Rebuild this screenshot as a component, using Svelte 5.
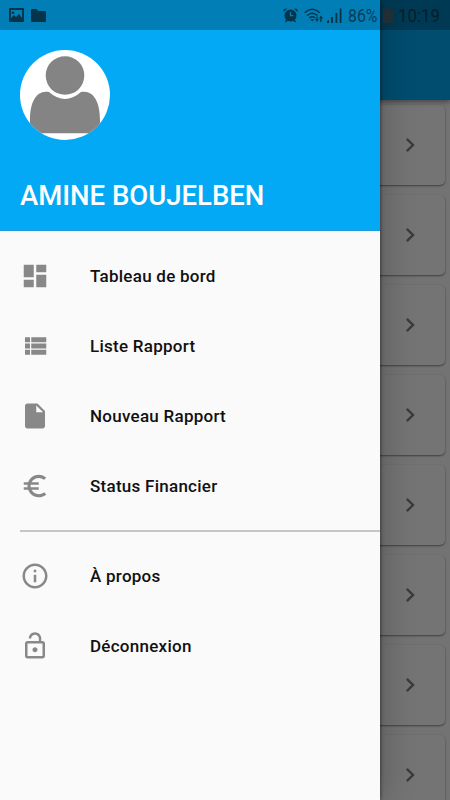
<script lang="ts">
  interface MenuItem {
    label: string
    icon: string
  }

  // Material icons, 24x24 grid
  const mainItems: MenuItem[] = [
    { label: 'Tableau de bord', icon: 'M3 13h8V3H3v10zm0 8h8v-6H3v6zm10 0h8V11h-8v10zm0-18v6h8V3h-8z' },
    { label: 'Liste Rapport', icon: 'M4 14h4v-4H4v4zm0 5h4v-4H4v4zM4 9h4V5H4v4zm5 5h12v-4H9v4zm0 5h12v-4H9v4zM9 5v4h12V5H9z' },
    { label: 'Nouveau Rapport', icon: 'M6 2c-1.1 0-1.99.9-1.99 2L4 20c0 1.1.89 2 1.99 2H18c1.1 0 2-.9 2-2V8l-6-6H6zm7 7V3.5L18.5 9H13z' },
    { label: 'Status Financier', icon: 'M15 18.5c-2.51 0-4.68-1.42-5.76-3.5H15v-2H8.58c-.05-.33-.08-.66-.08-1s.03-.67.08-1H15V9H9.24C10.32 6.92 12.5 5.5 15 5.5c1.61 0 3.09.59 4.23 1.57L21 5.3C19.41 3.87 17.3 3 15 3c-3.92 0-7.24 2.51-8.48 6H3v2h3.06c-.04.33-.06.66-.06 1s.02.67.06 1H3v2h3.52c1.24 3.49 4.56 6 8.48 6 2.31 0 4.41-.87 6-2.3l-1.78-1.77c-1.13.98-2.6 1.57-4.22 1.57z' },
  ]

  const otherItems: MenuItem[] = [
    { label: 'À propos', icon: 'M11 17h2v-6h-2v6zm1-15C6.48 2 2 6.48 2 12s4.48 10 10 10 10-4.48 10-10S17.52 2 12 2zm0 18c-4.41 0-8-3.59-8-8s3.59-8 8-8 8 3.59 8 8-3.59 8-8 8zM11 9h2V7h-2v2z' },
    { label: 'Déconnexion', icon: 'M12 17c1.1 0 2-.9 2-2s-.9-2-2-2-2 .9-2 2 .9 2 2 2zm6-9h-1V6c0-2.76-2.24-5-5-5S7 3.24 7 6h1.9c0-1.71 1.39-3.1 3.1-3.1s3.1 1.39 3.1 3.1v2H6c-1.1 0-2 .9-2 2v10c0 1.1.9 2 2 2h12c1.1 0 2-.9 2-2V10c0-1.1-.9-2-2-2zm0 12H6V10h12v10z' },
  ]

  const reports = [1, 2, 3, 4, 5, 6, 7, 8]
</script>

{#snippet menuRow(item: MenuItem)}
  <li class="menu-item">
    <svg class="menu-icon" viewBox="0 0 24 24"><path d={item.icon} /></svg>
    <span>{item.label}</span>
  </li>
{/snippet}

<div class="screen">
  <!-- page under the drawer -->
  <main class="page">
    <header class="app-bar"></header>
    <div class="report-list">
      {#each reports as id (id)}
        <div class="report-card">
          <svg class="chevron" viewBox="0 0 24 24"><path d="M10 6L8.59 7.41 13.17 12l-4.58 4.59L10 18l6-6z" /></svg>
        </div>
      {/each}
    </div>
  </main>

  <div class="scrim"></div>

  <aside class="drawer">
    <header class="account">
      <svg class="avatar" viewBox="0 0 90 90">
        <clipPath id="round"><circle cx="45" cy="45" r="45" /></clipPath>
        <g clip-path="url(#round)">
          <rect width="90" height="90" fill="#fff" />
          <circle cx="45" cy="25.5" r="19.3" />
          <path d="M29 42Q45 56 61 42C73 39.500 80 51 80 70v13.300H10V70C10 51 17 39.500 29 42z" />
        </g>
      </svg>
      <h1>AMINE BOUJELBEN</h1>
    </header>

    <ul class="menu">
      {#each mainItems as item}
        {@render menuRow(item)}
      {/each}
      <li class="divider"></li>
      {#each otherItems as item}
        {@render menuRow(item)}
      {/each}
    </ul>
  </aside>

  <div class="status-bar">
    <svg class="picture" viewBox="0 0 15 14">
      <path fill-rule="evenodd" d="M1 0h13q1 0 1 1v12q0 1-1 1H1q-1 0-1-1V1q0-1 1-1zm1 2v8l3-3 2 2 3-3 3 4V2zM4 3.500a1.300 1.300 0 1 1 0 2.600 1.300 1.300 0 0 1 0-2.600z" />
    </svg>
    <svg class="folder" viewBox="0 0 15 13">
      <path d="M1 0h4.500l2 2H14q1 0 1 1v9q0 1-1 1H1q-1 0-1-1V1q0-1 1-1z" />
    </svg>
    <span class="spacer"></span>
    <svg class="alarm" viewBox="0 0 15 15">
      <path fill-rule="evenodd" d="M7.500 1.500a6 6 0 1 1 0 12 6 6 0 0 1 0-12zM6.800 4v4.300h3.600V7H8.100V4z" />
      <path d="M.3 4.300L.8 1 4.300.5zM14.700 4.300L14.200 1 10.700.5zM2 14.500l1-3 2 1.500zM13 14.500l-1-3-2 1.500z" />
    </svg>
    <svg class="wifi" viewBox="0 0 20 15">
      <g fill="none" stroke="#063448" stroke-width="1.500">
        <path d="M.6 4.800Q8.200-2.200 15.800 4.800M3 7.500q5.200-4.600 10.400 0M5.300 10q2.900-2.500 5.800 0" />
      </g>
      <path d="M6.300 11.200h3.800L8.200 13.500zM11 11h1.300V8.500h1.400V11H15l-2 3zM15 10.500h1.200V14h1.400v-3.500H19l-2.100-3z" />
    </svg>
    <svg class="signal" viewBox="0 0 15 15">
      <path d="M0 15v-2l2-1v3zM4 15V9h2v6zM8.500 15V5h1.800v10zM12.700 15V.5h1.800V15z" />
    </svg>
    <span class="percent">86%</span>
    <svg class="battery" viewBox="0 0 10 15"><path d="M3 0h4v1.500h2q1 0 1 1V14q0 1-1 1H1q-1 0-1-1V2.500q0-1 1-1h2z" /></svg>
    <span class="clock">10:19</span>
  </div>
</div>

<style>
  :global(body) { margin: 0; }
  .screen {
    position: relative; width: 450px; height: 800px; overflow: hidden;
    font-family: Roboto, "Liberation Sans", sans-serif; background: #fafafa;
  }
  .page { display: flex; flex-direction: column; height: 800px; overflow: hidden; isolation: isolate; }
  .app-bar {
    flex: none; height: 100px; background: #03a9f4;
    box-shadow: 0 2px 5px rgba(0, 0, 0, 0.4); z-index: 1;
  }
  .report-list { display: flex; flex-direction: column; gap: 10px; padding: 5px; }
  .report-card {
    flex: none; display: flex; align-items: center; justify-content: flex-end;
    height: 80px; padding-right: 21px; box-sizing: border-box;
    border-radius: 5px; background: #fcfcfc;
    box-shadow: 0 1px 2px rgba(0, 0, 0, 0.45), 0 0 2px rgba(0, 0, 0, 0.05);
  }
  .chevron { width: 28px; height: 28px; fill: #808080; }
  .scrim { position: absolute; inset: 0; background: rgba(0, 0, 0, 0.54); }

  .drawer {
    position: absolute; top: 0; left: 0; width: 380px; height: 800px;
    background: #fafafa; box-shadow: 1px 0 3px rgba(0, 0, 0, 0.4), 4px 0 30px rgba(0, 0, 0, 0.22);
  }
  .account {
    height: 231px; padding: 50px 20px 0; box-sizing: border-box;
    background: #03a9f4; border-bottom: 1px solid #1b9bd8;
  }
  .avatar { display: block; width: 90px; height: 90px; fill: #848484; }
  h1 {
    margin: 38px 0 0; font-size: 27.5px; line-height: 36px; font-weight: 500;
    color: #fff; white-space: nowrap;
  }
  .menu { list-style: none; margin: 0; padding: 10px 0 0; }
  .menu-item {
    display: flex; align-items: center; gap: 40px; height: 70px; padding-left: 20px;
    font-size: 17px; line-height: 20px; letter-spacing: 0.26px; font-weight: 500; color: #111;
  }
  .menu-icon { width: 30px; height: 30px; fill: #888; }
  .divider { height: 20px; padding: 9px 0 0 20px; box-sizing: border-box; }
  .divider::before { content: ''; display: block; height: 2px; background: #c6c6c6; }

  .status-bar {
    position: absolute; top: 0; left: 0; display: flex; align-items: center;
    width: 450px; height: 30px; padding: 0 10px 0 9px; box-sizing: border-box;
    background: rgba(0, 0, 0, 0.25); fill: #063448; color: #063b55;
  }
  .picture { width: 15px; height: 14px; }
  .folder { width: 15px; height: 13px; margin-left: 7px; }
  .spacer { flex: 1; }
  .alarm { width: 15px; height: 15px; }
  .wifi { width: 20px; height: 15px; margin-left: 6px; }
  .signal { width: 15px; height: 15px; margin-left: 3px; }
  .percent { margin-left: 6px; width: 30px; font-size: 18px; transform: scaleX(0.88); transform-origin: left; }
  .battery { width: 10px; height: 15px; margin-left: 5px; fill: #202f37; }
  .clock { margin-left: 5px; width: 42px; font-size: 19px; color: #071e2a; transform: scaleX(0.89); transform-origin: left; }
</style>
